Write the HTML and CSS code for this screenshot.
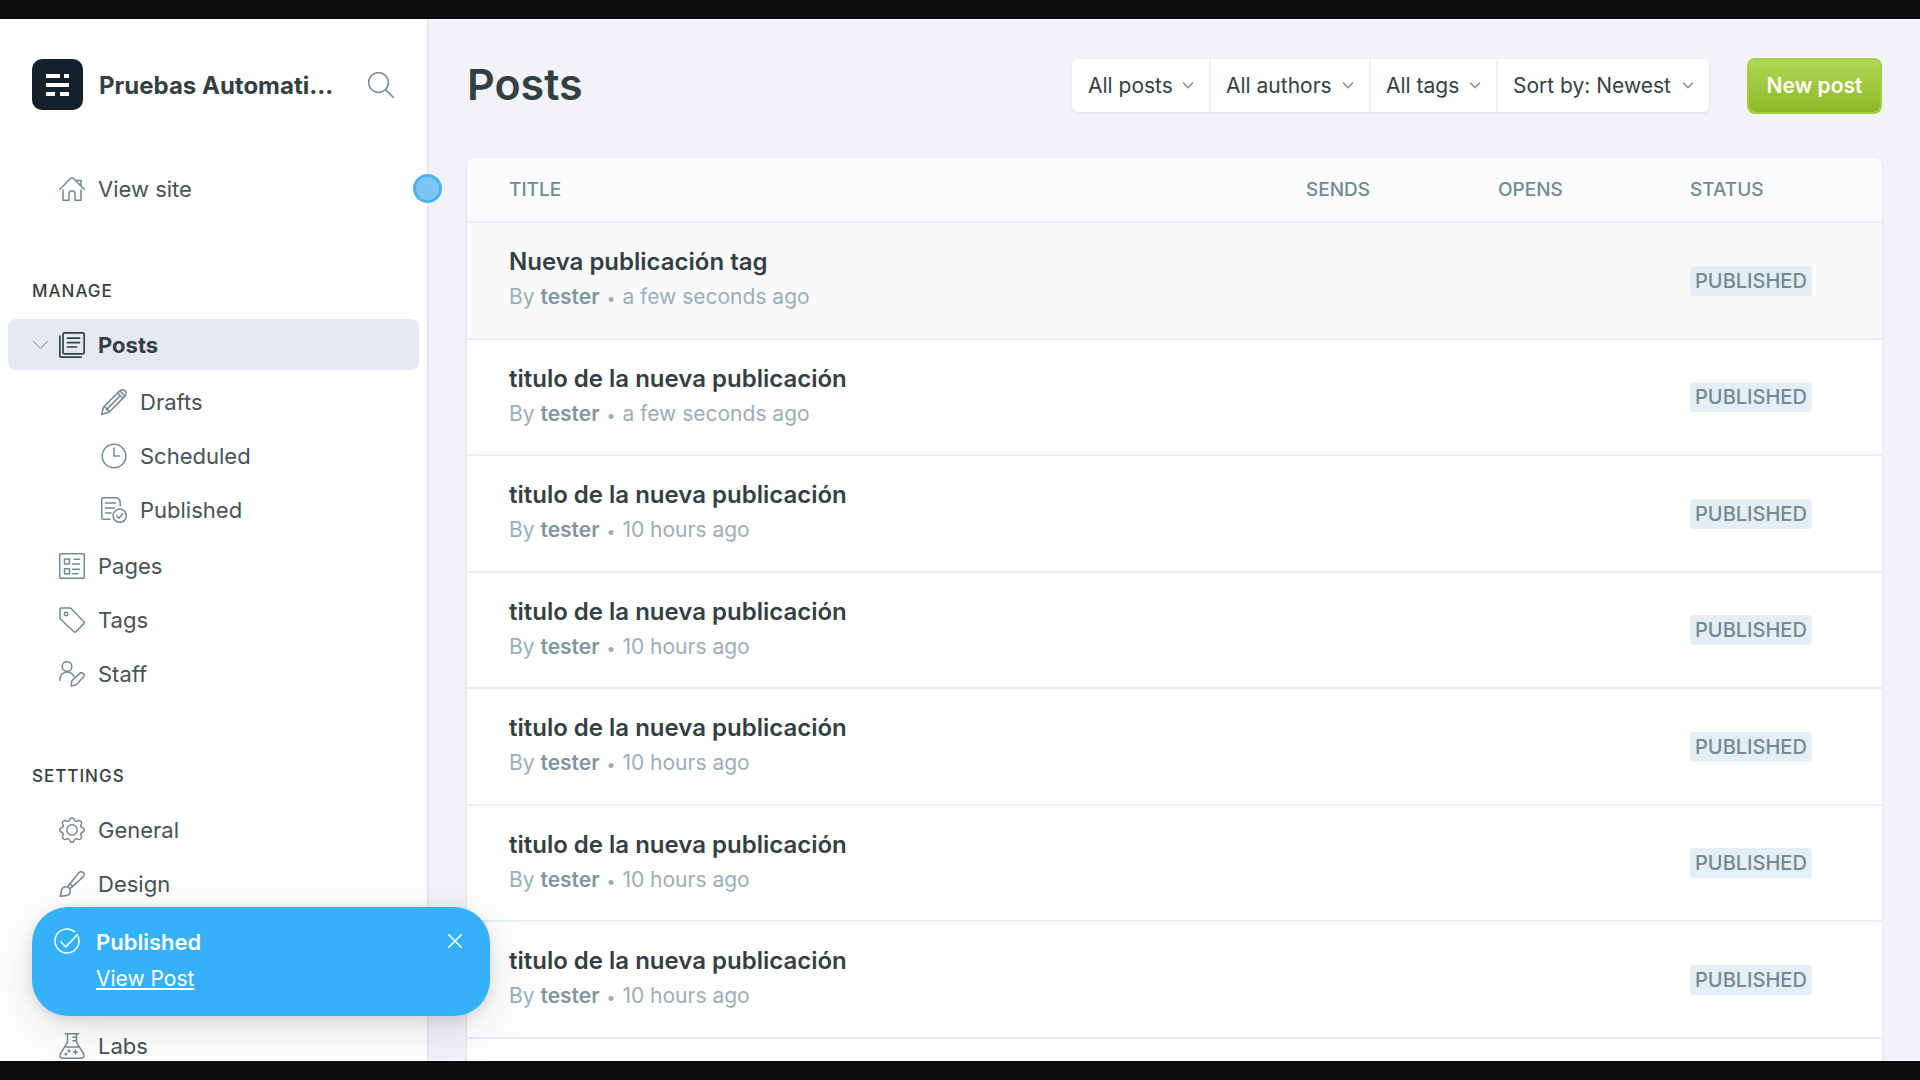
FILE: index.html
```html
<!DOCTYPE html>
<html lang="en">
<head>
<meta charset="utf-8">
<meta name="viewport" content="width=device-width, initial-scale=1">
<title>Posts - Pruebas Automatizadas</title>
<link rel="stylesheet" href="styles.css">
</head>
<body>
<div class="app">
  <aside class="sidebar">
    <header class="site">
      <svg class="site-logo" viewBox="0 0 51 51" aria-hidden="true"><rect width="51" height="51" rx="10" fill="#15212a"/><path fill="#fff" d="M14 15h14v4H14zM32 15h5v4h-5zM14 24h23v4H14zM14 33h9v4h-9zM28 33h9v4h-9z"/></svg>
      <span class="site-name">Pruebas Automati...</span>
      <button class="icon-button" type="button" aria-label="Search">
        <svg class="icon" viewBox="0 0 26 26"><circle cx="10.500" cy="10.500" r="9.900"/><path d="M17.600 17.600l8 8"/></svg>
      </button>
    </header>

    <nav class="nav" aria-label="Main">
      <a class="nav-item" href="#site">
        <svg class="icon" viewBox="0 0 26 26"><path d="M.7 13.500L11.700 2.200a1.800 1.800 0 0 1 2.600 0l11 11.300M4 14v10.300h6v-6.600a3 3 0 0 1 6 0v6.600h6V14M17 4.500h5v5"/></svg>
        <span>View site</span>
      </a>

      <h2 class="nav-title">Manage</h2>
      <ul class="nav-list">
        <li>
          <a class="nav-item nav-item-parent is-active" href="#posts" aria-current="page">
            <svg class="nav-chevron" viewBox="0 0 15 8"><path d="M.5.5l7 7 7-7"/></svg>
            <svg class="icon" viewBox="0 0 26 26"><rect x="4" y=".8" width="21.200" height="21" rx="1.800"/><path d="M.8 4v19.200c0 1.200.8 2 2 2H22M8.500 6.200h12M8.500 10.700h12M8.500 15h9"/></svg>
            <span>Posts</span>
          </a>
          <ul class="nav-list nav-sublist">
            <li><a class="nav-item" href="#drafts">
              <svg class="icon" viewBox="0 0 26 26"><path d="M.7 25.300l2-7.500L18.800 1.900a3.600 3.600 0 0 1 5.200 5.200L8 23.200zM2.700 17.800l2.200.6.400 2.300 2.200.4.500 2.100M16.700 4l5.200 5.200M18.800 1.900L24 7.100M6.500 19.600L19.300 6.600"/></svg>
              <span>Drafts</span></a></li>
            <li><a class="nav-item" href="#scheduled">
              <svg class="icon" viewBox="0 0 26 26"><circle cx="13" cy="13" r="11.800"/><path d="M13 5v8h5.500"/></svg>
              <span>Scheduled</span></a></li>
            <li><a class="nav-item" href="#published">
              <svg class="icon" viewBox="0 0 26 26"><path d="M9 22.200H2.500A1.800 1.800 0 0 1 .7 20.400V2.500C.7 1.500 1.500.7 2.500.7h11.700c3 0 5 2 5 5v3M4.500 6h10M4.500 11h9M4.500 16h5.500"/><circle cx="18.700" cy="18.700" r="6.600"/><path d="M15.600 19l2.200 2.200 4-4.700"/></svg>
              <span>Published</span></a></li>
          </ul>
        </li>
        <li><a class="nav-item" href="#pages">
          <svg class="icon" viewBox="0 0 26 26"><rect x=".7" y=".7" width="24.600" height="24.600" rx="1.500"/><path d="M5.500 6h5v5h-5zM5.500 15.700h5v5h-5zM15 6.300h5.500M13.500 11h7M13.500 16.300h7M13.500 20.700h5.300"/></svg>
          <span>Pages</span></a></li>
        <li><a class="nav-item" href="#tags">
          <svg class="icon" viewBox="0 0 26 26"><path d="M1.800 1h8.700c.7 0 1.300.2 1.800.7L24.600 14.400c.8.800.8 1.700 0 2.500l-7.400 7.600c-.8.800-1.700.8-2.500 0L1.600 12.300A2 2 0 0 1 1 11V1.800C1 1.300 1.300 1 1.800 1z"/><circle cx="7" cy="7" r="1.700"/></svg>
          <span>Tags</span></a></li>
        <li><a class="nav-item" href="#staff">
          <svg class="icon" viewBox="0 0 26 26"><circle cx="8" cy="5.500" r="4.800"/><path d="M.7 19.500C.7 14.500 3.600 11 8 11c3 0 5.500 1.500 6.800 4.300M12.200 25l.6-5.200 7.800-7.200c2.800-2.500 6 .8 3.700 3.600L17 24z"/></svg>
          <span>Staff</span></a></li>
      </ul>

      <h2 class="nav-title">Settings</h2>
      <ul class="nav-list">
        <li><a class="nav-item" href="#general">
          <svg class="icon" viewBox="0 0 26 26"><circle cx="13" cy="13" r="5.200"/><path d="M11 2.200C11.500.2 14.500.2 15 2.200c.5 2 2.200 2.600 3.900 1.600 2-1.200 4.500 1.200 3.300 3.300-1 1.700-.4 3.400 1.600 3.900 2 .5 2 3.500 0 4-2 .5-2.600 2.200-1.600 3.900 1.200 2-1.200 4.500-3.300 3.300-1.700-1-3.400-.4-3.900 1.600-.5 2-3.500 2-4 0-.5-2-2.200-2.600-3.900-1.600-2 1.200-4.500-1.200-3.300-3.300 1-1.700.4-3.400-1.600-3.900-2-.5-2-3.500 0-4 2-.5 2.600-2.200 1.600-3.900C2.600 5 5 2.600 7.100 3.800c1.700 1 3.400.4 3.900-1.600z"/></svg>
          <span>General</span></a></li>
        <li><a class="nav-item" href="#design">
          <svg class="icon" viewBox="0 0 26 26"><path d="M1 25.200c1.500-2.300.7-4.300 2-7 1.600-3 5.300-3 7-1.200 2 2 1.700 5-.8 6.800-2.200 1.500-5.200 1.200-8.200 1.400zM8.800 16l2-3.300 3 2.600-3.200 2.400M10.800 12.700l9-10.800c2.800-3 7 .5 4.600 3.700l-10.600 9.700"/></svg>
          <span>Design</span></a></li>
        <li class="nav-group"><a class="nav-item" href="#labs">
          <svg class="icon" viewBox="0 0 26 26"><path d="M6.500.8h13M8.500.8v8.400L1.600 20.600c-1.500 2.600-.2 4.700 2.400 4.700h18c2.600 0 3.900-2.100 2.400-4.700L17.500 9.200V.8M5.800 13.900h14.400M14 4.300h3.500M14 7.800h3.500M14.500 19h4M16.500 17v4"/><circle cx="10" cy="18" r=".7"/><circle cx="7" cy="21.200" r=".7"/></svg>
          <span>Labs</span></a></li>
      </ul>
    </nav>
  </aside>

  <main class="main">
    <header class="toolbar">
      <h1>Posts</h1>
      <div class="filters">
        <label class="filter filter-type"><select aria-label="Post type"><option>All posts</option></select><svg viewBox="0 0 10 7"><path d="M.5 1L5 5.800 9.500 1"/></svg></label>
        <label class="filter filter-author"><select aria-label="Author"><option>All authors</option></select><svg viewBox="0 0 10 7"><path d="M.5 1L5 5.800 9.500 1"/></svg></label>
        <label class="filter filter-tag"><select aria-label="Tag"><option>All tags</option></select><svg viewBox="0 0 10 7"><path d="M.5 1L5 5.800 9.500 1"/></svg></label>
        <label class="filter filter-sort"><select aria-label="Sort order"><option>Sort by: Newest</option></select><svg viewBox="0 0 10 7"><path d="M.5 1L5 5.800 9.500 1"/></svg></label>
      </div>
      <button class="new-post" type="button">New post</button>
    </header>

    <table class="posts">
      <thead>
        <tr><th class="col-title">Title</th><th>Sends</th><th>Opens</th><th>Status</th></tr>
      </thead>
      <tbody>
        <tr class="is-hovered"><td><h3>Nueva publicación tag</h3><p>By <b>tester</b> <span class="dot">•</span> a few seconds ago</p></td><td></td><td></td><td><span class="badge">Published</span></td></tr>
        <tr><td><h3>titulo de la nueva publicación</h3><p>By <b>tester</b> <span class="dot">•</span> a few seconds ago</p></td><td></td><td></td><td><span class="badge">Published</span></td></tr>
        <tr><td><h3>titulo de la nueva publicación</h3><p>By <b>tester</b> <span class="dot">•</span> 10 hours ago</p></td><td></td><td></td><td><span class="badge">Published</span></td></tr>
        <tr><td><h3>titulo de la nueva publicación</h3><p>By <b>tester</b> <span class="dot">•</span> 10 hours ago</p></td><td></td><td></td><td><span class="badge">Published</span></td></tr>
        <tr><td><h3>titulo de la nueva publicación</h3><p>By <b>tester</b> <span class="dot">•</span> 10 hours ago</p></td><td></td><td></td><td><span class="badge">Published</span></td></tr>
        <tr><td><h3>titulo de la nueva publicación</h3><p>By <b>tester</b> <span class="dot">•</span> 10 hours ago</p></td><td></td><td></td><td><span class="badge">Published</span></td></tr>
        <tr><td><h3>titulo de la nueva publicación</h3><p>By <b>tester</b> <span class="dot">•</span> 10 hours ago</p></td><td></td><td></td><td><span class="badge">Published</span></td></tr>
        <tr><td></td><td></td><td></td><td></td></tr>
      </tbody>
    </table>
  </main>

  <span class="pointer"></span>

  <div class="toast" role="status">
    <svg class="icon" viewBox="0 0 26 26"><path d="M20.600 3.700A12 12 0 1 0 24.300 9M7 14l4.800 5L23.500 6.500"/></svg>
    <div class="toast-body">
      <strong>Published</strong>
      <a href="#view">View Post</a>
    </div>
    <button class="icon-button toast-close" type="button" aria-label="Close">
      <svg viewBox="0 0 14 14"><path d="M.8.8l12.400 12.400M13.200.8L.8 13.200"/></svg>
    </button>
  </div>
</div>
</body>
</html>
```
FILE: styles.css
```css
* { box-sizing: border-box; }

body {
  margin: 0;
  background: #0d0d0d;
  color: #343f44;
  font-family: Inter, "Liberation Sans", sans-serif;
  font-size: 22px;
}

h1, h2, h3, p, ul { margin: 0; padding: 0; }
ul { list-style: none; }
a { color: inherit; text-decoration: none; }
button, select { font: inherit; color: inherit; border: 0; }
svg { display: block; flex: none; fill: none; stroke: currentColor; stroke-linecap: round; stroke-linejoin: round; }

.app {
  position: relative;
  display: flex;
  height: 100vh;
  overflow: hidden;
  border: solid #0d0d0d;
  border-width: 19px 0;
  background: #f2f3f7;
}

.icon { width: 26px; height: 26px; stroke-width: 1.5; color: #738a94; }
.icon-button { padding: 0; background: none; cursor: pointer; }

/* Sidebar */
.sidebar {
  flex: none;
  width: 429px;
  padding-top: 40px;
  border-right: 2px solid #e5e8ee;
  background: #fff;
}

.site { display: flex; align-items: center; padding: 0 33px 0 32px; }
.site-logo { width: 51px; height: 51px; stroke: none; }
.site-name { flex: 1; padding: 2px 0 0 16px; font-size: 24px; font-weight: 700; white-space: nowrap; }

.nav { padding: 53px 8px 0; }
.nav-title {
  margin: 67px 0 18px 24px;
  font-size: 17px;
  font-weight: 500;
  line-height: 20px;
  letter-spacing: 1px;
  text-transform: uppercase;
}
.nav-list { display: flex; flex-direction: column; gap: 3px; }
.nav-group { margin-top: 108px; }
.nav-item {
  display: flex;
  align-items: center;
  gap: 13px;
  height: 51px;
  padding-left: 51px;
  border-radius: 8px;
  color: #465359;
}
.nav-item-parent { padding-left: 25px; }
.nav-item.is-active { background: #e5eaf2; color: #343f44; font-weight: 700; }
.is-active .icon { color: #343f44; stroke-width: 1.7; }
.nav-chevron { width: 15px; height: 8px; margin-right: -2px; color: #738a94; }
.nav-sublist { padding: 6px 0 2px; }
.nav-sublist .nav-item { padding-left: 93px; }

/* Main column */
.main { flex: 1; min-width: 0; padding: 38px 38px 0; }
.toolbar { display: flex; align-items: center; height: 57px; margin-bottom: 44px; }
h1 { flex: 1; padding-bottom: 4px; font-size: 43px; font-weight: 600; line-height: 52px; }

.filters {
  display: flex;
  height: 53px;
  margin-right: 38px;
  border-radius: 6px;
  background: #fff;
  box-shadow: 0 1px 3px rgba(30, 40, 60, .1);
}
.filter { display: flex; align-items: center; gap: 10px; padding: 0 16px; }
.filter + .filter { padding-left: 15px; border-left: 2px solid #f0f1f4; }
.filter select { appearance: none; flex: 1; min-width: 0; padding: 0; background: none; font-size: 21px; outline: 0; }
.filter svg { width: 10px; height: 7px; color: #738a94; stroke-width: 1.3; }
.filter-type { width: 137px; }
.filter-author { width: 160px; }
.filter-tag { width: 127px; }
.filter-sort { width: 213px; }

.new-post {
  width: 135px;
  height: 56px;
  padding: 0;
  border: 2px solid #a4cd42;
  border-radius: 8px;
  background: linear-gradient(#afd654, #8db926) padding-box;
  color: #fff;
  font-size: 21px;
  font-weight: 600;
}

.posts {
  width: 100%;
  table-layout: fixed;
  border-collapse: separate;
  border-spacing: 0;
  border-radius: 8px;
  background: #fff;
  box-shadow: 0 1px 3px rgba(30, 40, 60, .12);
}
.posts th, .posts td { padding: 0; border-bottom: 2px solid #e5eff5; text-align: left; }
.posts th {
  width: 192px;
  height: 65px;
  background: #fafbfc;
  color: #738a94;
  font-size: 19px;
  font-weight: 500;
  text-transform: uppercase;
}
.posts th:first-child { width: auto; border-top-left-radius: 8px; }
.posts th:last-child { border-top-right-radius: 8px; }
.posts th:first-child, .posts td:first-child { padding-left: 42px; }
.posts td:first-child { padding-bottom: 2px; }
.posts tbody tr { height: 117px; }
.posts tbody tr:nth-child(even) { height: 116px; }
.is-hovered { background: #f9fafc; }
.posts h3 { font-size: 24px; font-weight: 600; line-height: 36px; }
.posts p { color: #9baeb8; font-size: 21px; line-height: 34px; }
.posts b { color: #7f96a1; font-weight: 600; }
.dot { padding: 0 1px; font-size: 16px; }
.badge {
  display: inline-block;
  padding: 0 5px;
  border-radius: 4px;
  background: #e5edf5;
  color: #738a94;
  font-size: 20px;
  font-weight: 500;
  line-height: 30px;
  text-transform: uppercase;
}

/* Overlays */
.pointer {
  position: absolute;
  top: 155px;
  left: 413px;
  width: 29px;
  height: 29px;
  border: 3px solid #4ab2f1;
  border-radius: 50%;
  background: #7cc6f4;
}

.toast {
  position: absolute;
  left: 32px;
  bottom: 45px;
  display: flex;
  align-items: flex-start;
  width: 458px;
  height: 109px;
  padding: 21px 28px 0 22px;
  border-radius: 36px;
  background: #35b1f9;
  color: #fff;
  box-shadow: 0 4px 12px rgba(0, 0, 0, .1), 0 12px 50px rgba(0, 0, 0, .12);
}
.toast .icon { color: #fff; }
.toast-body { display: flex; flex: 1; flex-direction: column; align-items: flex-start; padding-left: 16px; }
.toast-body strong { font-weight: 600; line-height: 28px; }
.toast-body a { margin-top: 8px; font-size: 21px; line-height: 30px; text-decoration: underline; }
.toast-close { padding-top: 6px; }
.toast-close svg { width: 14px; height: 14px; stroke-width: 1.6; }
```
